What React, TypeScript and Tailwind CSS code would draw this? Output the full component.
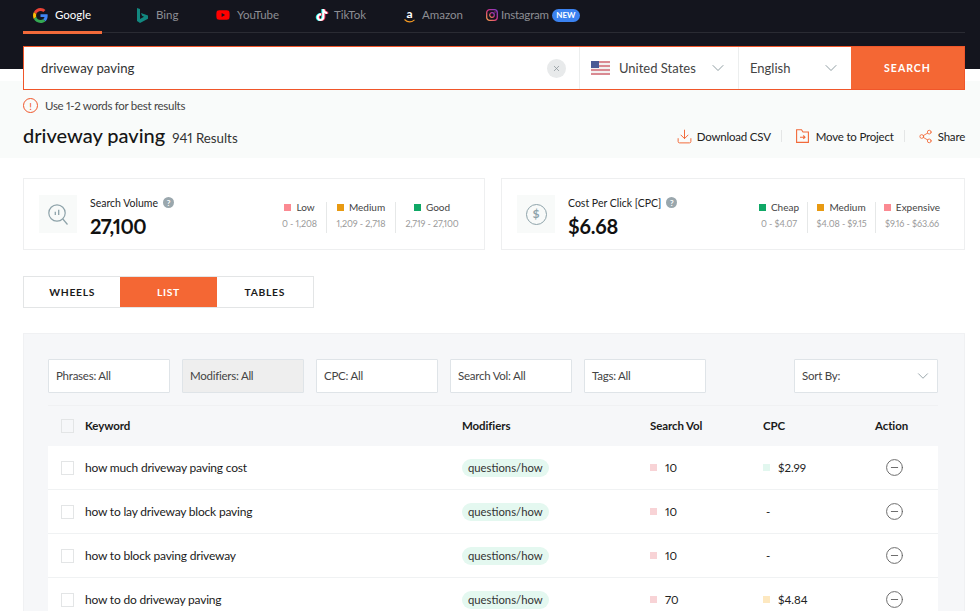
import React from "react";
import { ChevronDown, X, Download, Share2, CircleMinus } from "lucide-react";
import { FaTiktok, FaYoutube } from "react-icons/fa";

const GoogleG = () => (
  <svg width="15" height="15" viewBox="0 0 48 48">
    <path fill="#EA4335" d="M24 9.5c3.5 0 6.700 1.300 9.100 3.500l6.800-6.800C35.800 2.400 30.300 0 24 0 14.600 0 6.500 5.400 2.600 13.200l7.900 6.100C12.400 13.700 17.700 9.500 24 9.500z" />
    <path fill="#4285F4" d="M46.900 24.500c0-1.600-.1-3.100-.4-4.500H24v9h12.900c-.6 3-2.200 5.500-4.800 7.200l7.700 6c4.500-4.200 7.100-10.300 7.100-17.700z" />
    <path fill="#FBBC05" d="M10.500 28.700C10 27.200 9.800 25.600 9.800 24s.3-3.200.7-4.700l-7.900-6.100C.9 16.500 0 20.100 0 24s.9 7.500 2.600 10.800l7.900-6.100z" />
    <path fill="#34A853" d="M24 48c6.500 0 11.900-2.100 15.900-5.800l-7.700-6c-2.200 1.500-4.900 2.300-8.200 2.300-6.300 0-11.600-4.200-13.500-9.900l-7.900 6.100C6.500 42.600 14.600 48 24 48z" />
  </svg>
);

const BingIcon = () => (
  <svg width="11" height="15" viewBox="0 0 11 15">
    <path fill="#12877f" d="M0 0l3 1v10l4-2.300-2-1L4 5l7 2.500v3.300L3 15l-3-2z" />
  </svg>
);

const InstagramIcon = () => (
  <svg width="12" height="12" viewBox="0 0 12 12" fill="none">
    <defs>
      <linearGradient id="ig" x1="0" y1="1" x2="1" y2="0">
        <stop offset="0" stopColor="#f7a34b" />
        <stop offset="0.5" stopColor="#d6307f" />
        <stop offset="1" stopColor="#7a3fd0" />
      </linearGradient>
    </defs>
    <rect x="0.7" y="0.7" width="10.600" height="10.600" rx="3" stroke="url(#ig)" strokeWidth="1.300" />
    <circle cx="6" cy="6" r="2.300" stroke="url(#ig)" strokeWidth="1.200" />
    <circle cx="9" cy="3" r="0.700" fill="#c9358f" />
  </svg>
);

const AmazonIcon = () => (
  <span className="flex h-[15px] w-[11px] flex-col items-center">
    <span className="text-[12px] font-bold leading-[11px] text-white">a</span>
    <svg width="11" height="4" viewBox="0 0 11 4" fill="none">
      <path d="M0.500 0.500C3.500 3.300 7.500 3.300 10.500 0.800" stroke="#f59a23" strokeWidth="1.100" />
    </svg>
  </span>
);

const FolderArrow = () => (
  <svg width="13" height="14" viewBox="0 0 13 14" fill="none" stroke="#f26a3a" strokeWidth="1.100">
    <path d="M0.600 13.400V0.700H5.500L7 3H12.400V13.400Z" />
    <path d="M4 8.200H9M7.300 6.500L9 8.200L7.300 9.900" />
  </svg>
);

const SearchBars = () => (
  <svg width="20" height="21" viewBox="0 0 20 21" fill="none" stroke="#8ea3aa">
    <circle cx="9" cy="9" r="8.200" strokeWidth="1.200" />
    <path d="M14.800 15L19.500 20.500" strokeWidth="1.200" />
    <path d="M7.300 7.800V11M10.700 5.800V11" strokeWidth="1.300" />
  </svg>
);

const DollarIcon = () => (
  <span className="flex h-[21px] w-[21px] items-center justify-center rounded-full border-[1.5px] border-[#8ea3aa] text-[12px] font-bold leading-none text-[#8ea3aa]">$</span>
);

const Flag = () => (
  <svg width="19" height="14" viewBox="0 0 19 14">
    <rect width="19" height="14" fill="#f3f0f0" />
    <rect y="0" width="19" height="2" fill="#d98a92" />
    <rect y="4" width="19" height="2" fill="#d98a92" />
    <rect y="8" width="19" height="2" fill="#d98a92" />
    <rect y="12" width="19" height="2" fill="#d98a92" />
    <rect width="8" height="7" fill="#4a5a94" />
  </svg>
);

const Help = () => (
  <span className="flex h-[11px] w-[11px] items-center justify-center rounded-full bg-[#9aa7ad] text-[8px] font-bold leading-none text-white">?</span>
);

const Divider = () => <span className="block h-[12px] w-px bg-[#e4e6e6]" />;

type LegendItem = { color: string; label: string; range: string; w: string };

const Legend = ({ items }: { items: LegendItem[] }) => (
  <div className="mt-[7px] flex">
    {items.map((it, i) => (
      <div key={it.label} className={`flex h-[31px] flex-col items-center ${it.w} ${i > 0 ? "border-l border-[#e6e8e8]" : ""}`}>
        <div className="flex items-center gap-[5px] text-[10px] leading-[10px] text-[#444]">
          <span className="h-[7px] w-[7px]" style={{ background: it.color }} />
          {it.label}
        </div>
        <div className="mt-[6px] text-[9px] leading-[12px] tracking-[-0.1px] text-[#9a9a9a]">{it.range}</div>
      </div>
    ))}
  </div>
);

const StatCard = ({ icon, title, value, items, width, valueClass }: { icon: React.ReactNode; title: string; value: string; items: LegendItem[]; width: string; valueClass: string }) => (
  <div className={`flex h-[72px] ${width} items-center justify-between border border-[#eeeff0] bg-white pl-[15px] pr-[16px]`}>
    <div className="flex items-center gap-[13px]">
      <div className="flex h-[38px] w-[38px] items-center justify-center bg-[#f8faf9]">{icon}</div>
      <div className="pt-[5px]">
        <div className="flex items-center gap-[5px] text-[10.5px] leading-[14px] text-[#222]">{title}<Help /></div>
        <div className={`mt-[4px] text-[20px] font-bold leading-[24px] text-[#111] ${valueClass}`}>{value}</div>
      </div>
    </div>
    <Legend items={items} />
  </div>
);

const Filter = ({ label, active }: { label: string; active?: boolean }) => (
  <div className={`flex h-[34px] w-[122px] items-center rounded-[1px] border border-[#dfe4e8] pl-[7px] text-[11.5px] tracking-[-0.25px] text-[#444] ${active ? "bg-[#eeeeee]" : "bg-white"}`}>{label}</div>
);

const Row = ({ kw, vol, cpc, cpcColor }: { kw: string; vol: string; cpc: string; cpcColor?: string }) => (
  <div className="flex h-[44px] items-center border-b border-[#f0f2f3] bg-white text-[11.5px] text-[#222]">
    <div className="ml-[13px] h-[14px] w-[13px] border border-[#e3e5e6] bg-white" />
    <div className="ml-[11px] w-[377px] text-[12px] tracking-[-0.2px] text-[#1b1b1b]">{kw}</div>
    <div className="flex w-[188px] items-center">
      <span className="inline-flex h-[18px] items-center rounded-full bg-[#e4f8f0] px-[6px] pt-[1px] text-[11.3px] text-[#333]">questions/how</span>
    </div>
    <div className="flex w-[113px] items-center gap-[8px]">
      <span className="h-[7px] w-[7px] bg-[#f8d3d6]" />
      {vol}
    </div>
    <div className="flex w-[112px] items-center gap-[8px]">
      {cpcColor ? <span className="h-[7px] w-[7px]" style={{ background: cpcColor }} /> : null}
      <span className={cpcColor ? "" : "ml-[3px]"}>{cpc}</span>
    </div>
    <CircleMinus size={19} strokeWidth={1.2} className="ml-[10px] text-[#666]" />
  </div>
);

const NavTab = ({ icon, label, active, width, gap }: { icon: React.ReactNode; label: string; active?: boolean; width: string; gap: string }) => (
  <div className={`flex h-[34px] ${width} ${gap} items-center border-b-[3px] pb-[1px] ${active ? "border-[#f26a3a] text-white" : "border-transparent text-[#8d8e94]"}`}>
    {icon}
    <span className="text-[11.5px]">{label}</span>
  </div>
);

export default function App() {
  return (
    <div className="h-[611px] w-[980px] overflow-hidden bg-white proportional-nums" style={{ fontFamily: "Lato, 'Noto Sans', sans-serif" }}>
      <header className="h-[69px] bg-[#14151e] pl-[23px] pr-[15px]">
        <nav className="flex h-[33px] items-start border-b border-[#2a2b33]">
          <NavTab width="w-[79px] pl-[10px]" gap="gap-[7px]" active icon={<GoogleG />} label="Google" />
          <NavTab width="w-[79px] ml-[35px]" gap="gap-[8px]" icon={<BingIcon />} label="Bing" />
          <NavTab width="w-[100px]" gap="gap-[7px]" icon={<FaYoutube size={14} className="text-[#ff0000]" />} label="YouTube" />
          <NavTab width="w-[88px]" gap="gap-[6px]" icon={<FaTiktok size={12} className="text-white [filter:drop-shadow(1px_0_0_#fe2c55)_drop-shadow(-1px_0_0_#25f4ee)]" />} label="TikTok" />
          <NavTab width="w-[82px]" gap="gap-[7px]" icon={<AmazonIcon />} label="Amazon" />
          <div className="flex h-[30px] items-center gap-[3px] text-[#8d8e94]">
            <InstagramIcon />
            <span className="text-[11.5px] tracking-[-0.2px]">Instagram</span>
            <span className="flex h-[13px] w-[28px] items-center justify-center rounded-full bg-[#3b82f0] text-[8px] font-bold text-white">NEW</span>
          </div>
        </nav>
      </header>

      <section className="flex h-[89px] flex-col bg-[linear-gradient(#ffffff_12px,#f9fbfa_12px)] pl-[23px] pr-[15px]">
        <div className="relative z-10 -mt-[23px] flex h-[44px] shrink-0 border border-[#f0562a] bg-white">
          <div className="flex flex-1 items-center justify-between border-r border-[#eceeee] pl-[17px] pr-[13px]">
            <span className="mt-[2px] text-[13.2px] text-[#333]">driveway paving</span>
            <span className="flex h-[19px] w-[19px] items-center justify-center rounded-full bg-[#e8eaeb]"><X size={9} className="text-[#8b9499]" /></span>
          </div>
          <div className="flex w-[159px] items-center border-r border-[#eceeee] pl-[11px] pr-[10px] text-[13px] text-[#444]">
            <Flag />
            <span className="ml-[9px] mt-[2px] flex-1">United States</span>
            <ChevronDown size={20} strokeWidth={1} className="text-[#7a8a90]" />
          </div>
          <div className="flex w-[112px] items-center pl-[11px] pr-[10px] text-[13px] text-[#444]">
            <span className="mt-[2px] flex-1">English</span>
            <ChevronDown size={20} strokeWidth={1} className="text-[#7a8a90]" />
          </div>
          <div className="flex w-[113px] items-center justify-center bg-[#f46734] pt-[2px] text-[10.5px] font-bold tracking-[1px] text-white">SEARCH</div>
        </div>

        <div className="mt-[7px] flex items-center gap-[7px] text-[11.5px] tracking-[-0.3px] text-[#444]">
          <span className="flex h-[15px] w-[15px] items-center justify-center rounded-full border border-[#f0562a] text-[10px] leading-none text-[#f0562a]">!</span>
          Use 1-2 words for best results
        </div>

        <div className="mt-[9px] flex items-center justify-between">
          <div className="flex items-baseline gap-[7px]">
            <span className="text-[20px] font-medium leading-[24px] text-[#161616]">driveway paving</span>
            <span className="text-[13.3px] text-[#333]">941 Results</span>
          </div>
          <div className="flex items-center text-[11.5px] tracking-[-0.2px] text-[#222]">
            <Download size={17} strokeWidth={1.4} className="text-[#f26a3a]" />
            <span className="ml-[4px]">Download CSV</span>
            <span className="ml-[10px] mr-[14px]"><Divider /></span>
            <FolderArrow />
            <span className="ml-[7px]">Move to Project</span>
            <span className="ml-[10px] mr-[13px]"><Divider /></span>
            <Share2 size={15} strokeWidth={1.4} className="text-[#f26a3a]" />
            <span className="ml-[5px]">Share</span>
          </div>
        </div>
      </section>

      <main className="pl-[23px] pr-[15px] pt-[20px]">
        <div className="flex justify-between">
          <StatCard
            width="w-[462px]"
            icon={<SearchBars />}
            title="Search Volume"
            value="27,100"
            valueClass="tracking-[-0.6px]"
            items={[
              { color: "#fb8a92", label: "Low", range: "0 - 1,208", w: "w-[53px]" },
              { color: "#e89a12", label: "Medium", range: "1,209 - 2,718", w: "w-[69px]" },
              { color: "#0fa866", label: "Good", range: "2,719 - 27,100", w: "w-[73px]" },
            ]}
          />
          <StatCard
            width="w-[464px]"
            icon={<DollarIcon />}
            title="Cost Per Click [CPC]"
            value="$6.68"
            valueClass="tracking-[-0.2px]"
            items={[
              { color: "#0fa866", label: "Cheap", range: "0 - $4.07", w: "w-[56px]" },
              { color: "#e89a12", label: "Medium", range: "$4.08 - $9.15", w: "w-[68px]" },
              { color: "#fb8a92", label: "Expensive", range: "$9.16 - $63.66", w: "w-[73px]" },
            ]}
          />
        </div>

        <div className="mt-[26px] flex h-[32px] w-[291px] border border-[#e3e5e6] text-[10.3px] font-bold tracking-[0.7px] text-[#1b1b1b]">
          <div className="flex flex-1 items-center justify-center bg-white pt-[2px]">WHEELS</div>
          <div className="flex flex-1 items-center justify-center bg-[#f46734] pt-[2px] text-white">LIST</div>
          <div className="flex flex-1 items-center justify-center bg-white pt-[2px]">TABLES</div>
        </div>

        <div className="mt-[25px] border border-[#f0f1f3] bg-[#f6f7f9] pl-[24px] pr-[26px] pt-[25px]">
          <div className="flex items-center justify-between">
            <div className="flex gap-[12px]">
              <Filter label="Phrases: All" />
              <Filter label="Modifiers: All" active />
              <Filter label="CPC: All" />
              <Filter label="Search Vol: All" />
              <Filter label="Tags: All" />
            </div>
            <div className="flex h-[34px] w-[144px] items-center justify-between rounded-[1px] border border-[#dfe4e8] bg-white pl-[7px] pr-[5px] text-[11.5px] tracking-[-0.25px] text-[#444]">
              Sort By:
              <ChevronDown size={18} strokeWidth={1} className="text-[#7a8a90]" />
            </div>
          </div>
          <div className="mt-[12px] border-t border-[#f0f1f3]">
            <div className="flex h-[40px] items-center pb-[1px] text-[11.5px] font-bold tracking-[-0.1px] text-[#1b1b1b]">
              <div className="ml-[13px] h-[14px] w-[13px] border border-[#e3e5e6]" />
              <div className="ml-[11px] w-[377px]">Keyword</div>
              <div className="w-[188px]">Modifiers</div>
              <div className="w-[113px]">Search Vol</div>
              <div className="w-[112px]">CPC</div>
              <div>Action</div>
            </div>
            <Row kw="how much driveway paving cost" vol="10" cpc="$2.99" cpcColor="#e2f7ef" />
            <Row kw="how to lay driveway block paving" vol="10" cpc="-" />
            <Row kw="how to block paving driveway" vol="10" cpc="-" />
            <Row kw="how to do driveway paving" vol="70" cpc="$4.84" cpcColor="#fde8c0" />
          </div>
        </div>
      </main>
    </div>
  );
}
